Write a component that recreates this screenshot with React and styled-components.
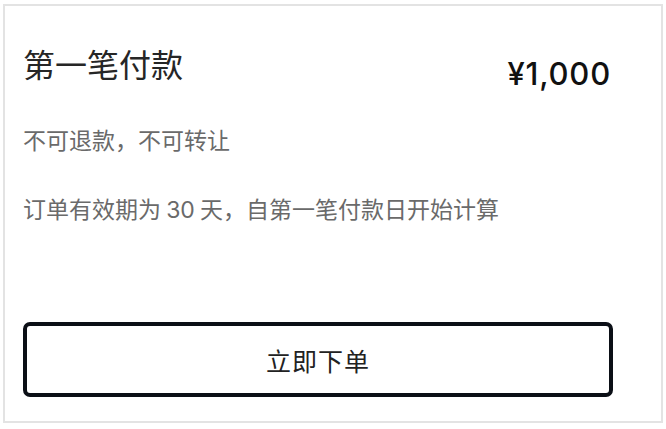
import React from "react";
import styled, { createGlobalStyle } from "styled-components";

const Global = createGlobalStyle`
  html, body { margin: 0; padding: 0; background: #ffffff; }
  body { font-family: Inter, "Noto Sans CJK SC", sans-serif; }
`;

const Page = styled.div`
  padding: 4px 3px 0 3px;
`;

const Card = styled.section`
  box-sizing: border-box;
  width: 660px;
  height: 419px;
  border: 2px solid #e3e3e3;
  padding: 0 0 0 18px;
  display: flex;
  flex-direction: column;
`;

const Content = styled.div`
  width: 590px;
  display: flex;
  flex-direction: column;
  flex: 1;
`;

const Header = styled.div`
  display: flex;
  justify-content: space-between;
  align-items: flex-start;
  margin-top: 35px;
`;

const Title = styled.h2`
  margin: 0;
  font-family: "Noto Sans CJK SC", sans-serif;
  font-weight: 400;
  font-size: 32px;
  line-height: 44px;
  color: #262626;
`;

const Price = styled.div`
  font-family: Inter, sans-serif;
  font-weight: 450;
  font-size: 31px;
  letter-spacing: 0.8px;
  line-height: 40px;
  color: #111;
  margin-top: 13px;
  padding-right: 2px;
`;

const Note = styled.p`
  margin: ${(p) => p.$top}px 0 0 0;
  font-family: "Noto Sans CJK SC", sans-serif;
  font-size: 23px;
  line-height: 32px;
  color: #6a6a6a;
  letter-spacing: 0;
`;

const Num = styled.span`
  font-family: Inter, sans-serif;
`;

const OrderButton = styled.button`
  box-sizing: border-box;
  margin-top: auto;
  margin-bottom: 24px;
  width: 590px;
  height: 75px;
  background: #fff;
  border: 4px solid #0b0f16;
  border-radius: 7px;
  font-family: "Noto Sans CJK SC", sans-serif;
  font-size: 25px;
  letter-spacing: 1px;
  color: #222;
  cursor: pointer;
`;

export default function App() {
  return (
    <>
      <Global />
      <Page>
        <Card>
          <Content>
            <Header>
              <Title>第一笔付款</Title>
              <Price>¥1,000</Price>
            </Header>
            <Note $top={29}>不可退款，不可转让</Note>
            <Note $top={37}>
              订单有效期为 <Num>30</Num> 天，自第一笔付款日开始计算
            </Note>
            <OrderButton>立即下单</OrderButton>
          </Content>
        </Card>
      </Page>
    </>
  );
}
